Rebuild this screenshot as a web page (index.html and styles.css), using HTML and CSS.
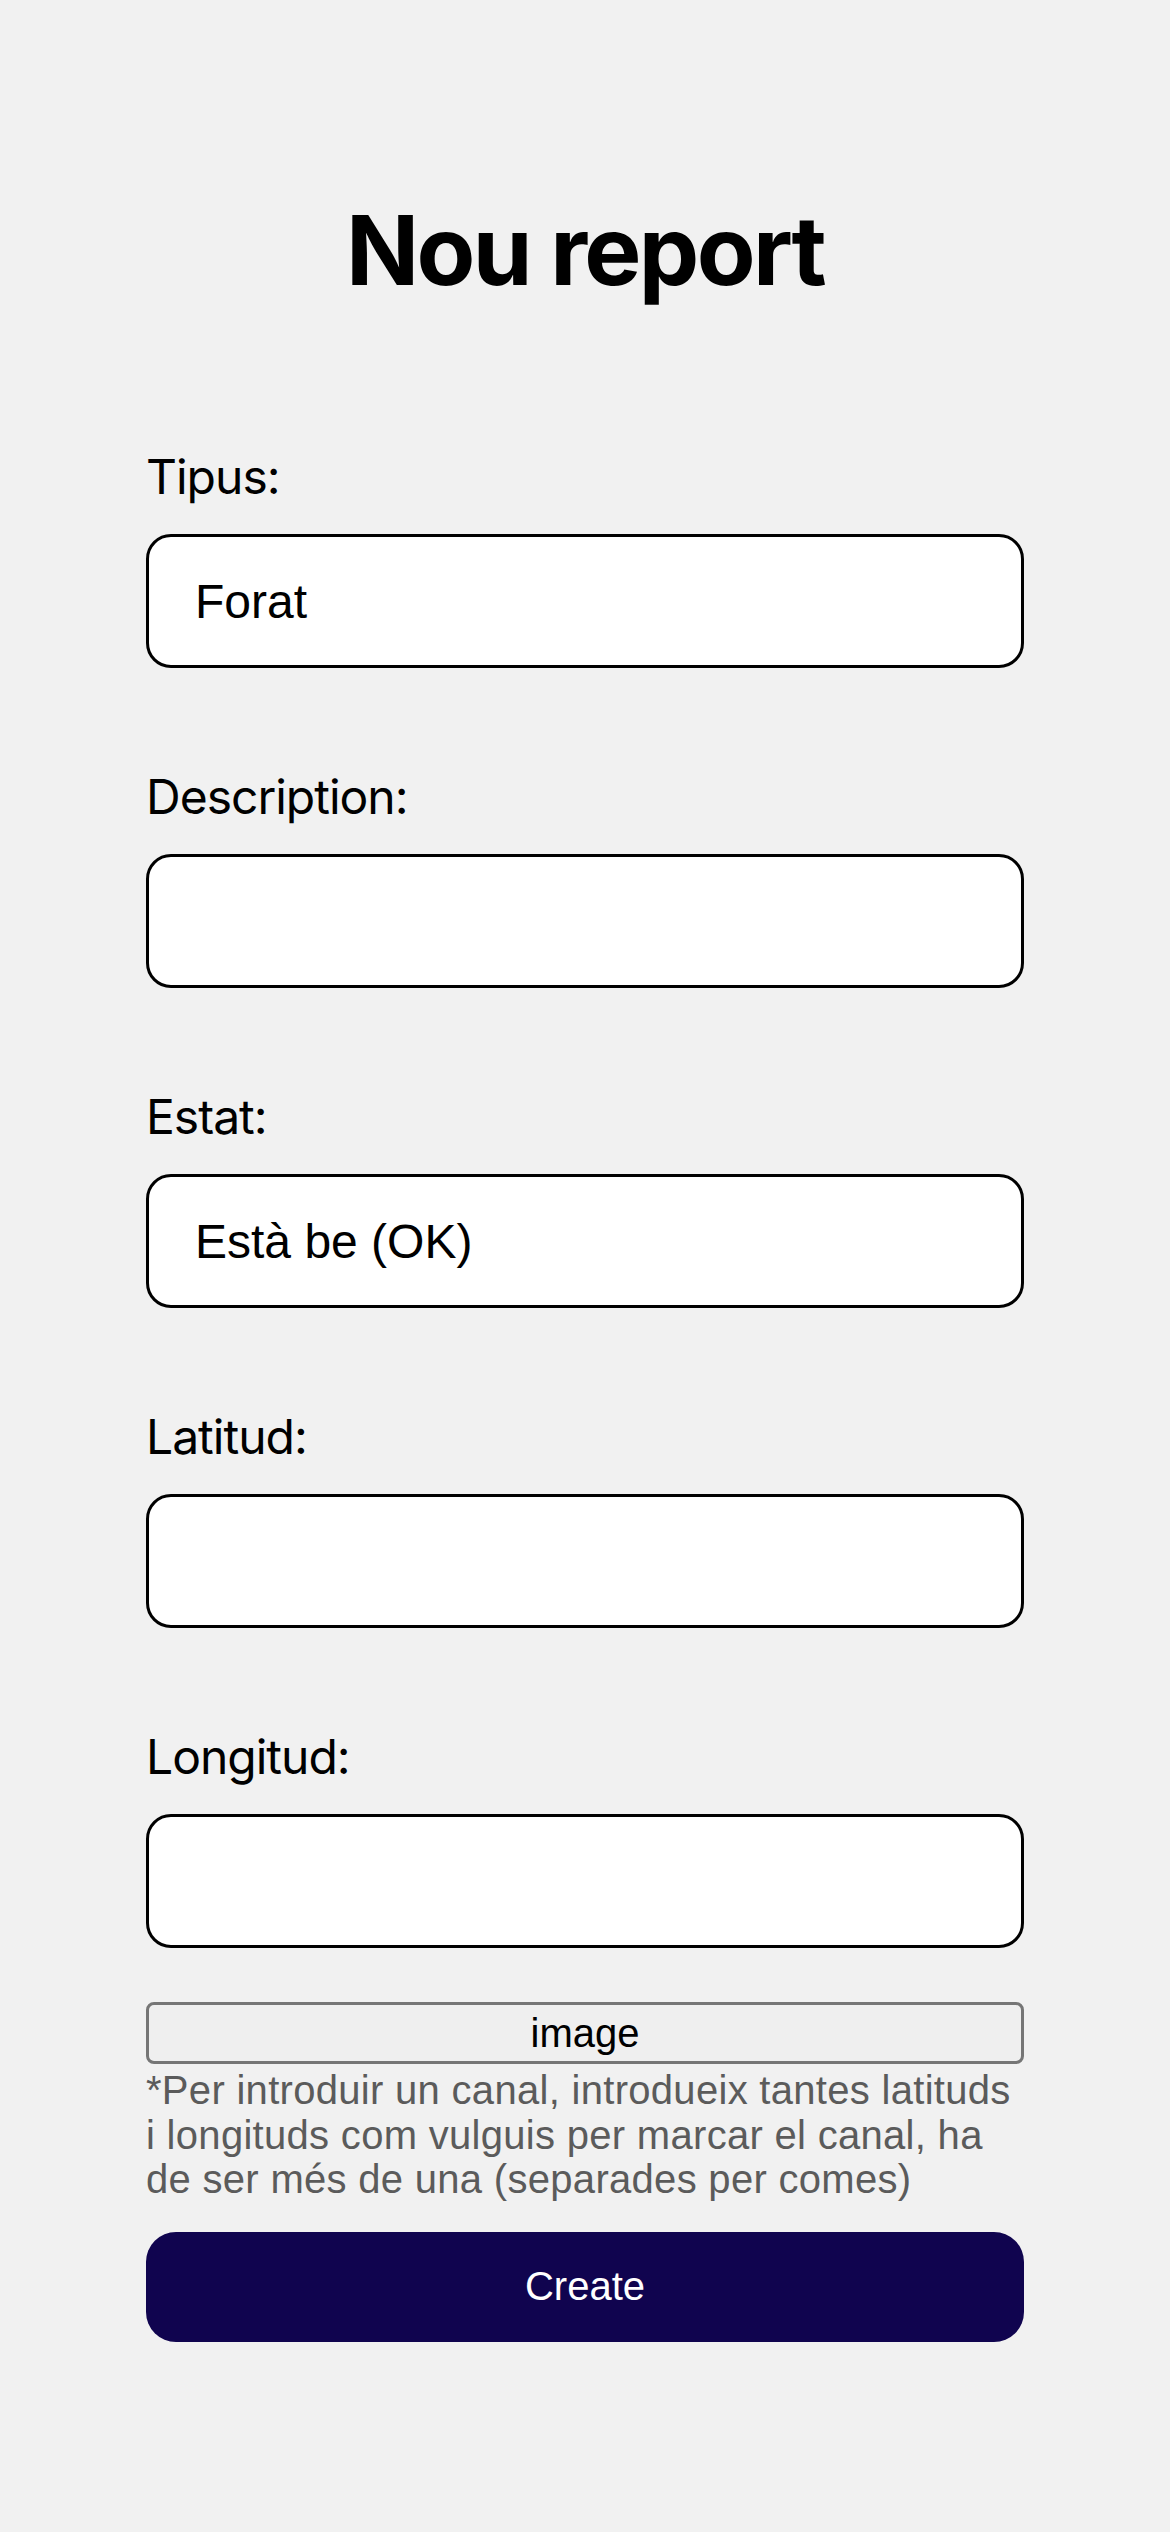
FILE: index.html
```html
<!DOCTYPE html>
<html lang="ca">
<head>
<meta charset="utf-8">
<title>Nou report</title>
<link rel="stylesheet" href="styles.css">
</head>
<body>
<main class="page">
  <h1 class="title">Nou report</h1>
  <form class="form">
    <div class="field">
      <label class="label" for="tipus">Tipus:</label>
      <input class="input" id="tipus" type="text" value="Forat">
    </div>
    <div class="field">
      <label class="label" for="desc">Description:</label>
      <input class="input" id="desc" type="text" value="">
    </div>
    <div class="field">
      <label class="label" for="estat">Estat:</label>
      <input class="input" id="estat" type="text" value="Està be (OK)">
    </div>
    <div class="field">
      <label class="label" for="lat">Latitud:</label>
      <input class="input" id="lat" type="text" value="">
    </div>
    <div class="field field-last">
      <label class="label" for="lon">Longitud:</label>
      <input class="input" id="lon" type="text" value="">
    </div>
    <button class="image-btn" type="button">image</button>
    <p class="help">*Per introduir un canal, introdueix tantes latituds i longituds com vulguis per marcar el canal, ha de ser més de una (separades per comes)</p>
    <button class="create-btn" type="button">Create</button>
  </form>
</main>
</body>
</html>
```
FILE: styles.css
```css
html {
  background: #f1f1f1;
}
body {
  margin: 0;
  background: #f1f1f1;
  font-family: Inter, "Noto Sans", sans-serif;
  color: #000;
}
.page {
  width: 878px;
  margin: 0 auto;
  padding-top: 192px;
  padding-bottom: 190px;
}
.title {
  margin: 0;
  font-size: 96px;
  line-height: 116px;
  font-weight: 700;
  letter-spacing: -2.6px;
  text-align: center;
}
.form {
  display: flex;
  flex-direction: column;
  margin-top: 140px;
}
.field {
  display: flex;
  flex-direction: column;
  gap: 28px;
  margin-bottom: 100px;
}
.field-last {
  margin-bottom: 54px;
}
.label {
  font-size: 48px;
  line-height: 58px;
  letter-spacing: -1px;
}
.input {
  box-sizing: border-box;
  width: 100%;
  height: 134px;
  margin: 0;
  padding: 0 46px;
  border: 3px solid #000;
  border-radius: 25px;
  background: #fff;
  font-family: "Liberation Sans", Arial, sans-serif;
  font-size: 48px;
  color: #000;
  outline: none;
}
.image-btn {
  box-sizing: border-box;
  width: 100%;
  height: 62px;
  margin: 0;
  padding: 0;
  border: 3px solid #767676;
  border-radius: 8px;
  background: #efefef;
  font-family: "Liberation Sans", Arial, sans-serif;
  font-size: 40px;
  color: #000;
}
.help {
  margin: 4px 0 0;
  font-family: "Liberation Sans", Arial, sans-serif;
  font-size: 40px;
  line-height: 44.5px;
  letter-spacing: 0.3px;
  color: #5b5b5b;
}
.create-btn {
  box-sizing: border-box;
  width: 100%;
  height: 110px;
  margin: 30px 0 0;
  padding: 0;
  border: none;
  border-radius: 30px;
  background: #10044f;
  font-family: "Liberation Sans", Arial, sans-serif;
  font-size: 40px;
  color: #fff;
}
```
